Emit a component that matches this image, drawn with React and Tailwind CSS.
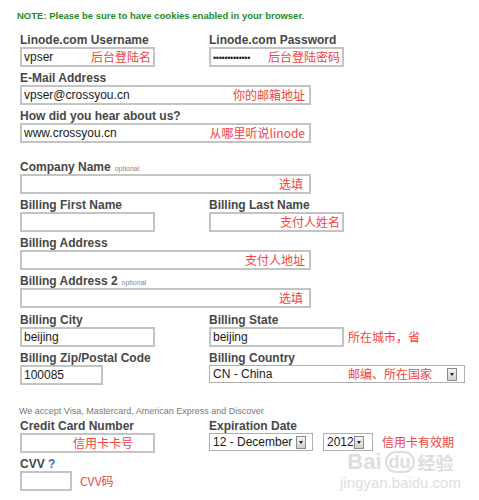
import React from 'react';

const font = { fontFamily: '"Liberation Sans", Arial, "Noto Sans CJK SC", sans-serif' };

function Label({ children, optional }) {
  return (
    <div className="h-[14px] leading-[14px] text-[12px] font-bold text-[#474747] whitespace-nowrap">
      {children}
      {optional && <span className="ml-1 text-[7px] font-normal text-[#888]">optional</span>}
    </div>
  );
}

function Note({ children, className = '' }) {
  return (
    <span className={`text-[12px] text-[#f24343] whitespace-nowrap ${className}`} style={{ fontFamily: '"Noto Sans CJK SC", sans-serif' }}>
      {children}
    </span>
  );
}

function Input({ w, value, note, noteClass = '' }) {
  return (
    <div className={`${w} h-[20px] border-2 border-[#c4c4c4] bg-white flex items-center justify-between px-[2px]`}>
      <span className="text-[12px] text-[#1a1a1a] whitespace-nowrap">{value}</span>
      {note && <Note className={noteClass}>{note}</Note>}
    </div>
  );
}

function DropBtn() {
  return (
    <div className="shrink-0 w-[10px] h-[13px] border border-[#8a8a8a] bg-gradient-to-b from-[#f4f4f4] to-[#cfcfcf] flex items-center justify-center">
      <div className="w-0 h-0 border-l-[2.5px] border-r-[2.5px] border-t-[3px] border-l-transparent border-r-transparent border-t-[#222]" />
    </div>
  );
}

export default function App() {
  return (
    <div className="relative w-[479px] h-[500px] bg-white overflow-hidden" style={font}>
      <div className="pl-[17px] pt-[9px] h-[33px] text-[9.5px] font-bold text-[#1f8c1f] whitespace-nowrap">
        NOTE: Please be sure to have cookies enabled in your browser.
      </div>

      <div className="pl-[20px] flex flex-col">
        {/* usernames */}
        <div className="grid grid-cols-[189px_1fr] mb-[4px]">
          <div>
            <Label>Linode.com Username</Label>
            <Input w="w-[135px]" value="vpser" note="后台登陆名" />
          </div>
          <div>
            <Label>Linode.com Password</Label>
            <Input w="w-[135px]" value={<span className="text-[9px] tracking-[-0.3px]">•••••••••••••</span>} note="后台登陆密码" />
          </div>
        </div>

        <div className="mb-[4px]">
          <Label>E-Mail Address</Label>
          <Input w="w-[291px]" value="vpser@crossyou.cn" note="你的邮箱地址" noteClass="pr-[2px]" />
        </div>

        <div className="mb-[17px]">
          <Label>How did you hear about us?</Label>
          <Input w="w-[291px]" value="www.crossyou.cn" note="从哪里听说linode" noteClass="pr-[2px]" />
        </div>

        <div className="mb-[4px]">
          <Label optional>Company Name</Label>
          <Input w="w-[291px]" value="" note="选填" noteClass="pr-[4px]" />
        </div>

        <div className="grid grid-cols-[189px_1fr] mb-[4px]">
          <div>
            <Label>Billing First Name</Label>
            <Input w="w-[135px]" value="" />
          </div>
          <div>
            <Label>Billing Last Name</Label>
            <Input w="w-[135px]" value="" note="支付人姓名" />
          </div>
        </div>

        <div className="mb-[4px]">
          <Label>Billing Address</Label>
          <Input w="w-[291px]" value="" note="支付人地址" noteClass="pr-[2px]" />
        </div>

        <div className="mb-[5px]">
          <Label optional>Billing Address 2</Label>
          <Input w="w-[291px]" value="" note="选填" noteClass="pr-[4px]" />
        </div>

        <div className="grid grid-cols-[189px_1fr] mb-[4px]">
          <div>
            <Label>Billing City</Label>
            <Input w="w-[135px]" value="beijing" />
          </div>
          <div>
            <Label>Billing State</Label>
            <div className="flex items-center gap-[4px]">
              <Input w="w-[135px]" value="beijing" />
              <Note>所在城市，省</Note>
            </div>
          </div>
        </div>

        <div className="grid grid-cols-[189px_1fr]">
          <div>
            <Label>Billing Zip/Postal Code</Label>
            <Input w="w-[83px]" value="100085" />
          </div>
          <div>
            <Label>Billing Country</Label>
            <div className="w-[256px] h-[18px] border border-[#b0b0b0] bg-white flex items-center pl-[3px] pr-[7px]">
              <span className="text-[12px] text-[#1a1a1a] w-[135px] whitespace-nowrap">CN - China</span>
              <Note className="flex-1">邮编、所在国家</Note>
              <DropBtn />
            </div>
          </div>
        </div>

        <div className="mt-[18px] h-[16px] leading-[16px] -ml-[1px] text-[9px] text-[#777] whitespace-nowrap">
          We accept Visa, Mastercard, American Express and Discover
        </div>

        <div className="grid grid-cols-[189px_1fr] mb-[4px]">
          <div>
            <Label>Credit Card Number</Label>
            <Input w="w-[135px]" value="" note="信用卡卡号" noteClass="pr-[18px]" />
          </div>
          <div>
            <Label>Expiration Date</Label>
            <div className="flex items-center">
              <div className="w-[104px] h-[18px] border border-[#b0b0b0] bg-white flex items-center justify-between pl-[3px] pr-[6px]">
                <span className="text-[12px] text-[#1a1a1a] whitespace-nowrap">12 - December</span>
                <DropBtn />
              </div>
              <div className="ml-[10px] w-[50px] h-[18px] border border-[#b0b0b0] bg-white flex items-center pl-[3px]">
                <span className="text-[12px] text-[#1a1a1a] whitespace-nowrap">2012</span>
                <DropBtn />
              </div>
              <Note className="ml-[9px]">信用卡有效期</Note>
            </div>
          </div>
        </div>

        <div>
          <Label>
            CVV <span className="text-[#2f6fd0]">?</span>
          </Label>
          <div className="flex items-center gap-[8px]">
            <Input w="w-[52px]" value="" />
            <Note>CVV码</Note>
          </div>
        </div>
      </div>

      {/* watermark */}
      <div className="absolute left-[340px] top-[450px] flex flex-col items-center text-[#dedede] pointer-events-none">
        <div className="flex items-center gap-[3px] text-[22px] font-bold leading-[24px]">
          <span>Bai</span>
          <span className="border-2 border-[#dedede] rounded-full px-[2px] text-[18px] leading-[18px]">du</span>
          <span className="text-[18px]" style={{ fontFamily: '"Noto Sans CJK SC", sans-serif' }}>经验</span>
        </div>
        <span className="text-[15px] leading-[18px]">jingyan.baidu.com</span>
      </div>
    </div>
  );
}
